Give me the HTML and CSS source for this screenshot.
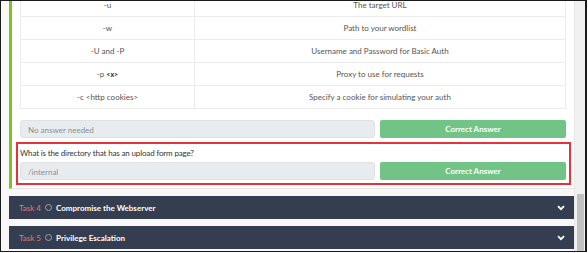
FILE: index.html
```html
<!DOCTYPE html>
<html>
<head>
<meta charset="utf-8"/>
<link rel="stylesheet" href="styles.css">
</head>
<body>
<div class="screen">
  <div class="page">

    <div class="task open">
      <table class="flags">
        <tr><td>-u</td><td>The target URL</td></tr>
        <tr><td>-w</td><td>Path to your wordlist</td></tr>
        <tr><td>-U and -P</td><td>Username and Password for Basic Auth</td></tr>
        <tr><td>-p <b>&lt;x&gt;</b></td><td>Proxy to use for requests</td></tr>
        <tr><td>-c &lt;http cookies&gt;</td><td>Specify a cookie for simulating your auth</td></tr>
      </table>

      <div class="answer-row">
        <div class="answer">No answer needed</div>
        <button class="correct">Correct Answer</button>
      </div>

      <div class="question highlight">
        <div class="q-text">What is the directory that has an upload form page?</div>
        <div class="answer-row">
          <div class="answer">/internal</div>
          <button class="correct">Correct Answer</button>
        </div>
      </div>
    </div>

    <div class="task closed">
      <span class="task-no">Task 4</span>
      <span class="dot"></span>
      <span class="task-title">Compromise the Webserver</span>
      <svg class="chev" width="8" height="6" viewBox="0 0 8 6"><path d="M1 1.2 L4 4.2 L7 1.2" stroke="#fff" stroke-width="1.8" fill="none"/></svg>
    </div>

    <div class="task closed">
      <span class="task-no">Task 5</span>
      <span class="dot"></span>
      <span class="task-title">Privilege Escalation</span>
      <svg class="chev" width="8" height="6" viewBox="0 0 8 6"><path d="M1 1.2 L4 4.2 L7 1.2" stroke="#fff" stroke-width="1.8" fill="none"/></svg>
    </div>

  </div>
  <div class="scrollbar"><div class="thumb"></div></div>
</div>
</body>
</html>
```

FILE: styles.css
```css
body {
  margin: 0;
  background: #fff;
  font-family: Lato, "Open Sans", sans-serif;
}

.screen {
  width: 584px;
  height: 250px;
  border: 1px solid #1a1a1a;
  border-right-width: 2px;
  display: flex;
  overflow: hidden;
}

.page {
  flex: 1;
  background: #f8f8f8;
  padding-left: 8px;
  overflow: hidden;
}

.task.open {
  background: #fff;
  border-left: 3px solid #7fc31c;
  border-bottom: 1px solid #e6e6e6;
  padding: 0 8px 3px 8px;
}

.flags {
  width: 100%;
  border-collapse: collapse;
  margin-top: -8px;
  font-size: 8px;
  color: #555;
}

.flags td {
  border: 1px solid #ececec;
  height: 22px;
  padding: 0;
  text-align: center;
}

.flags td:first-child {
  width: 173px;
}

.flags b {
  color: #222;
  font-size: 7px;
}

.answer-row {
  display: flex;
  gap: 5px;
}

.task.open > .answer-row {
  margin-top: 11px;
}

.answer {
  flex: 1 1 0;
  height: 18px;
  line-height: 18px;
  background: #e9ecef;
  border: 1px solid #dfe2e5;
  border-radius: 3px;
  box-sizing: border-box;
  padding-left: 7px;
  font-size: 8px;
  color: #8a8f95;
}

.correct {
  width: 186px;
  height: 18px;
  border: none;
  border-radius: 2px;
  background: #72c486;
  color: #fff;
  font-family: Lato, "Open Sans", sans-serif;
  font-size: 8px;
  font-weight: bold;
  padding: 0;
}

.highlight {
  margin: 4px -5px 0 -4px;
  border: 2px solid #e4343a;
  padding: 2px 3px 3px 2px;
}

.q-text {
  font-size: 8px;
  letter-spacing: -0.15px;
  color: #333;
  height: 16px;
  line-height: 14px;
}

.task.closed {
  margin-top: 7px;
  height: 23px;
  background: #353e51;
  display: flex;
  align-items: center;
  padding: 0 9px 0 10px;
  font-size: 8px;
}

.task-no {
  color: #e3776d;
}

.dot {
  width: 5px;
  height: 5px;
  border: 1px solid #9aa0ab;
  border-radius: 50%;
  margin: 0 4px 0 4px;
}

.task-title {
  color: #fff;
  font-weight: bold;
  flex: 1;
}

.scrollbar {
  width: 10px;
  background: #f1f1f1;
  border-left: 1px solid #e8e8e8;
  position: relative;
}

.thumb {
  position: absolute;
  right: 1px;
  top: 193px;
  bottom: 0;
  width: 7px;
  background: #c1c1c1;
}
```
